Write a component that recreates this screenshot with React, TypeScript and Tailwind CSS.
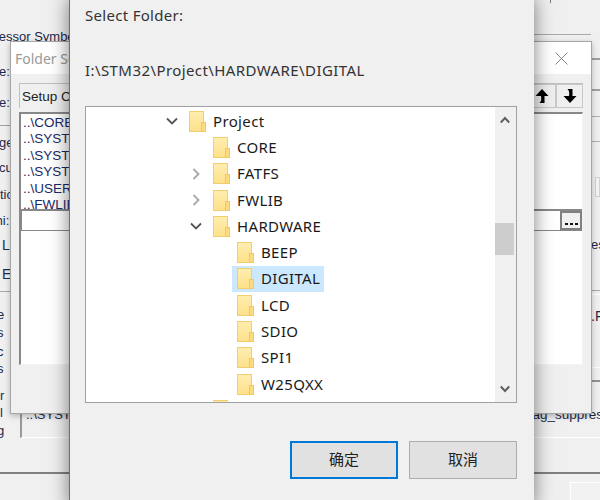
import React from "react";

const sans = "font-['Liberation_Sans',sans-serif]";
const ui = "font-['Noto_Sans','Noto_Sans_CJK_SC',sans-serif]";

function Folder() {
  return (
    <svg width="17" height="21" viewBox="0 0 17 21" className="shrink-0">
      <defs>
        <linearGradient id="fg" x1="0" y1="0" x2="0" y2="1">
          <stop offset="0" stopColor="#ffeeb0" />
          <stop offset="1" stopColor="#fde08a" />
        </linearGradient>
      </defs>
      <rect x="0.5" y="0.5" width="14" height="20" fill="url(#fg)" stroke="#f1cf70" />
      <rect x="12.5" y="11.5" width="4" height="9" fill="#fbdb7e" stroke="#eec966" />
    </svg>
  );
}

function Chevron({ dir, tone }: { dir: "down" | "right"; tone: string }) {
  return (
    <svg width="12" height="12" viewBox="0 0 12 12" className="shrink-0">
      <path
        d={dir === "down" ? "M1 3.5 L6 8.5 L11 3.5" : "M3.5 1 L8.5 6 L3.5 11"}
        fill="none"
        stroke={tone}
        strokeWidth="1.8"
      />
    </svg>
  );
}

type Node = {
  label: string;
  level: 0 | 1 | 2;
  chevron?: "down" | "right";
  selected?: boolean;
};

const nodes: Node[] = [
  { label: "Project", level: 0, chevron: "down" },
  { label: "CORE", level: 1 },
  { label: "FATFS", level: 1, chevron: "right" },
  { label: "FWLIB", level: 1, chevron: "right" },
  { label: "HARDWARE", level: 1, chevron: "down" },
  { label: "BEEP", level: 2 },
  { label: "DIGITAL", level: 2, selected: true },
  { label: "LCD", level: 2 },
  { label: "SDIO", level: 2 },
  { label: "SPI1", level: 2 },
  { label: "W25QXX", level: 2 },
];

const indent = ["pl-[74px]", "pl-[98px]", "pl-[122px]"];

function TreeRow({ n }: { n: Node }) {
  return (
    <div className={"h-[26.3px] flex items-center shrink-0 " + indent[n.level]}>
      <div className="w-[24px] flex justify-center">
        {n.chevron && (
          <Chevron dir={n.chevron} tone={n.chevron === "down" ? "#555555" : "#a8a8a8"} />
        )}
      </div>
      <div
        className={
          "flex items-center h-[26px] pl-[5px] pr-[4px] gap-[7px] " +
          (n.selected ? "bg-[#cce8ff]" : "")
        }
      >
        <Folder />
        <span className={"text-[15px] leading-none tracking-[0.35px] text-[#1a1a1a] " + ui}>{n.label}</span>
      </div>
    </div>
  );
}

function UpArrow({ flip = false }: { flip?: boolean }) {
  return (
    <svg width="16" height="16" viewBox="0 0 16 16" className={flip ? "rotate-180 -scale-x-100" : ""}>
      <path d="M8 1 L14.5 8 L10.5 8 L10.5 15 L5.5 15 C7.5 13 7.5 11 7 8 L1.5 8 Z" fill="#000" />
    </svg>
  );
}

function ListLine({ t }: { t: string }) {
  return <div className="h-[16.4px] leading-[16.4px] whitespace-nowrap">{t}</div>;
}

const leftBits = [
  { t: "Processor Symbols", c: "h-[18px] mt-[28px] -ml-[28px]" },
  { t: "e:", c: "h-[18px] mt-[17px] -ml-[1px]" },
  { t: "e:", c: "h-[18px] mt-[13px] -ml-[1px]" },
  { t: "", c: "h-[1px] w-[10px] mt-[13px] bg-[#a0a0a0]" },
  { t: "ge", c: "h-[18px] mt-[8px] -ml-[1px]" },
  { t: "cu", c: "h-[18px] mt-[7px] -ml-[1px]" },
  { t: "tio", c: "h-[18px] mt-[9px]" },
  { t: "mi:", c: "h-[18px] mt-[8px] -ml-[8px]" },
  { t: "L", c: "h-[18px] mt-[6px] ml-[2px] text-[14px]" },
  { t: "E", c: "h-[18px] mt-[11px] ml-[2px] text-[14px]" },
  { t: "", c: "h-[1px] w-[10px] mt-[8px] bg-[#a8a8a8]" },
  { t: "e", c: "h-[18px] mt-[14px] -ml-[3px]" },
  { t: "s", c: "h-[18px] mt-[0px] -ml-[3px]" },
  { t: "c", c: "h-[18px] mt-[1px] -ml-[3px]" },
  { t: "s", c: "h-[18px] mt-[-1px] -ml-[3px]" },
  { t: "r", c: "h-[18px] mt-[9px]" },
  { t: "l", c: "h-[18px] mt-[-1px]" },
  { t: "g", c: "h-[18px] mt-[0px] -ml-[3px]" },
];

export default function App() {
  return (
    <div className="relative w-[600px] h-[500px] overflow-hidden bg-[#f0f0f0]">
      {/* Base application window (mostly covered) */}
      <div className={"absolute inset-0 flex flex-col text-[13px] leading-[18px] text-[#1c2a4a] " + sans}>
        <div className="h-[472px] shrink-0 flex">
          <div className="w-[10px] shrink-0 flex flex-col whitespace-nowrap">
            {leftBits.map((b, i) => (
              <div key={i} className={b.c}>{b.t}</div>
            ))}
          </div>
          <div className="flex-1 min-w-0 flex flex-col">
            <div className="h-[35px] shrink-0 flex justify-between border-b border-[#a8a8a8] ml-[524px]">
              <i className="ml-[16px] w-[1px] h-[3px] bg-[#777777]" />
            </div>
            <div className="mt-[264px] ml-[10px] h-[139px] shrink-0 flex items-end justify-between pb-[13px] pl-[4px] -mr-[12px] border-l-[2px] border-b border-l-[#9a9a9a] border-b-white whitespace-nowrap overflow-hidden">
              <span>..\SYSTEM</span>
              <span className="text-[13.5px]">flag_suppres</span>
            </div>
          </div>
          <div className="w-[9px] shrink-0 flex flex-col whitespace-nowrap">
            <i className="mt-[58px] h-[2px] bg-[#a0a0a0]" />
            <i className="mt-[29px] h-[2px] bg-[#a0a0a0]" />
            <i className="mt-[25px] h-[1px] bg-[#b0b0b0]" />
            <i className="mt-[24px] h-[1px] bg-[#b0b0b0]" />
            <i className="mt-[35px] ml-[4px] h-[20px] border border-[#d0d0d0] bg-[#f4f4f4]" />
            <div className="mt-[39px]">es</div>
            <i className="mt-[36px] h-[1px] bg-[#a8a8a8]" />
            <i className="mt-[3px] h-[1px] bg-white" />
            <div className="mt-[12px] text-[14px]">.F</div>
            <i className="mt-[42px] h-[1px] bg-white" />
            <i className="mt-[12px] h-[2px] bg-[#909090]" />
          </div>
        </div>
        <div className="h-[2px] shrink-0 bg-[#808080]" />
        <div className="flex-1 flex justify-end pt-[8px]">
          <div className="w-[30px] border-l border-t border-white bg-[#f2f2f2]" />
        </div>
      </div>

      {/* Folder Setup window */}
      <div className={"absolute left-[10px] top-[41px] w-[582px] h-[373px] bg-[#f0f0f0] border border-[#a6a6a6] shadow-[0_2px_6px_rgba(0,0,0,0.25)] flex flex-col " + sans}>
        <div className="h-[32px] shrink-0 bg-white flex items-center justify-between pl-[4px] pr-[23px]">
          <span className={"text-[14px] text-[#9a9a9a] " + ui}>Folder Setup</span>
          <svg width="13" height="13" viewBox="0 0 13 13">
            <path d="M0.5 0.5 L12.5 12.5 M12.5 0.5 L0.5 12.5" stroke="#777" strokeWidth="0.9" />
          </svg>
        </div>
        <div className="mx-[8px] mt-[9px] h-[25px] shrink-0 flex items-stretch border-t border-l border-[#c0c0c0] bg-[#f0f0f0]">
          <span className="flex-1 pl-[2px] pt-[1px] text-[13.5px] leading-[24px] text-[#222]">Setup Compiler Include Paths:</span>
          <div className="w-[28px] border border-[#c8c8c8] flex items-center justify-center">
            <UpArrow />
          </div>
          <div className="w-[27px] border border-[#c8c8c8] flex items-center justify-center">
            <UpArrow flip />
          </div>
        </div>
        <div className="mx-[8px] mt-[4px] flex-1 mb-[48px] flex flex-col bg-white border-t-[2px] border-l-[2px] border-[#888888] border-r border-b border-r-[#f4f4f4] border-b-[#f4f4f4]">
          <div className="h-[95px] shrink-0 overflow-hidden pl-[2px] pt-[1px] text-[13.5px] text-[#1c2a66]">
            <ListLine t="..\CORE" />
            <ListLine t="..\SYSTEM\delay" />
            <ListLine t="..\SYSTEM\sys" />
            <ListLine t="..\SYSTEM\usart" />
            <ListLine t="..\USER" />
            <ListLine t="..\FWLIB\inc" />
          </div>
          <div className="h-[22px] shrink-0 flex border-t-[2px] border-b-[1px] border-[#888888]">
            <div className="flex-1 border-l-[1px] border-[#888888]" />
            <div className="w-[22px] bg-[#f0f0f0] border-[2px] border-[#808080] flex items-end justify-center pb-[3px] gap-[2px]">
              <i className="w-[3px] h-[2px] bg-[#111]" />
              <i className="w-[3px] h-[2px] bg-[#111]" />
              <i className="w-[3px] h-[2px] bg-[#111]" />
            </div>
          </div>
        </div>
      </div>

      {/* Select Folder dialog */}
      <div className={"absolute left-[69px] -top-[2px] w-[465px] h-[510px] bg-[#f0f0f0] border-l border-[#707070] shadow-[0_0_18px_rgba(0,0,0,0.5)] pl-[15px] pr-[17px] flex flex-col " + ui}>
        <div className="mt-[7px] h-[20px] text-[15px] leading-[20px] text-[#333] tracking-[0.3px] whitespace-nowrap">Select Folder:</div>
        <div className="mt-[35px] h-[20px] text-[15px] leading-[20px] text-[#333] tracking-[0.42px] whitespace-nowrap">I:\STM32\Project\HARDWARE\DIGITAL</div>
        <div className="mt-[26px] h-[297px] shrink-0 border border-[#a0a0a0] bg-white flex overflow-hidden">
          <div className="relative flex-1 pt-[1px] overflow-hidden flex flex-col">
            {nodes.map((n) => (
              <TreeRow key={n.label} n={n} />
            ))}
            <div className="absolute left-[127px] top-[293px] w-[15px] h-[3px] bg-[#fde9a3] border-t border-[#f1cf70]" />
          </div>
          <div className="relative w-[21px] shrink-0 bg-[#f0f0f0] flex flex-col items-center justify-between py-[9px] pr-[2px]">
            <svg width="10" height="8" viewBox="0 0 10 8">
              <path d="M0.8 6.5 L5 2 L9.2 6.5" fill="none" stroke="#606060" strokeWidth="2" />
            </svg>
            <svg width="10" height="8" viewBox="0 0 10 8">
              <path d="M0.8 1.5 L5 6 L9.2 1.5" fill="none" stroke="#606060" strokeWidth="2" />
            </svg>
            <div className="absolute left-0 top-[116px] w-[19px] h-[32px] bg-[#cdcdcd]" />
          </div>
        </div>
        <div className="mt-[38px] flex justify-end gap-[11px] text-[15px] text-[#222]">
          <div className="w-[108px] h-[38px] pb-[2px] bg-[#e1e1e1] border-[2px] border-[#0078d7] flex items-center justify-center">确定</div>
          <div className="w-[108px] h-[38px] pb-[2px] bg-[#e1e1e1] border-[1px] border-[#adadad] flex items-center justify-center">取消</div>
        </div>
      </div>
    </div>
  );
}
